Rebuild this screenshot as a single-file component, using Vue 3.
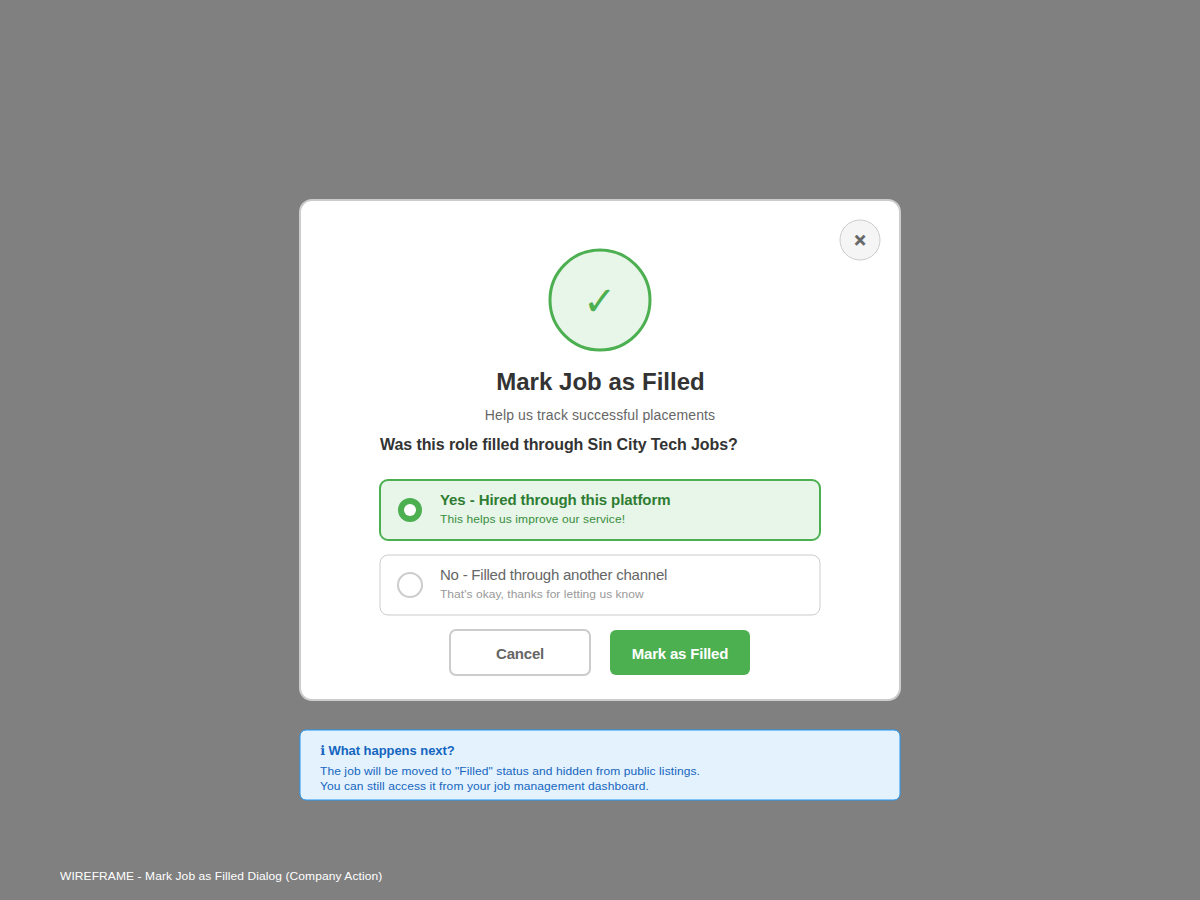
<script setup>
const options = [
  { title: 'Yes - Hired through this platform', note: 'This helps us improve our service!', selected: true },
  { title: 'No - Filled through another channel', note: "That's okay, thanks for letting us know", selected: false }
]
</script>

<template>
  <main class="screen">
    <section class="dialog" role="dialog">
      <button class="close" aria-label="Close">
        <svg class="frame" viewBox="0 0 42 42"><circle cx="21" cy="21" r="20" fill="#f5f5f5" stroke="#ccc" /></svg>
        <span class="close-mark">×</span>
      </button>
      <div class="badge">
        <svg class="frame" viewBox="0 0 104 104"><circle cx="52" cy="52" r="50" fill="#e8f5e9" stroke="#4caf50" stroke-width="3" /></svg>
        <span class="tick">✓</span>
      </div>
      <h1>Mark Job as Filled</h1>
      <p class="subtitle">Help us track successful placements</p>
      <div class="form">
        <h2>Was this role filled through Sin City Tech Jobs?</h2>
        <div v-for="o in options" :key="o.title" class="option" :class="{ selected: o.selected }">
          <svg class="frame" viewBox="0 0 442 62">
            <rect x="1" y="1" width="440" height="60" rx="8" :fill="o.selected ? '#e8f5e9' : '#fff'" :stroke="o.selected ? '#4caf50' : '#ccc'" :stroke-width="o.selected ? 2 : 1" />
          </svg>
          <svg class="radio" viewBox="0 0 26 26">
            <template v-if="o.selected">
              <circle cx="13" cy="13" r="12" fill="#4caf50" />
              <circle cx="13" cy="13" r="6" fill="#fff" />
            </template>
            <circle v-else cx="13" cy="13" r="12" fill="#fff" stroke="#ccc" stroke-width="2" />
          </svg>
          <div class="copy">
            <div class="option-title">{{ o.title }}</div>
            <div class="option-note small">{{ o.note }}</div>
          </div>
        </div>
      </div>
      <div class="actions">
        <button class="cancel">Cancel</button>
        <button class="confirm">Mark as Filled</button>
      </div>
    </section>
    <aside class="info">
      <svg class="frame" viewBox="0 0 602 72"><rect x="1" y="1" width="600" height="70" rx="6" fill="#e3f2fd" stroke="#2196f3" /></svg>
      <h3><span class="info-mark">ℹ</span> What happens next?</h3>
      <p class="small">The job will be moved to "Filled" status and hidden from public listings.</p>
      <p class="small">You can still access it from your job management dashboard.</p>
    </aside>
    <footer class="small">WIREFRAME - Mark Job as Filled Dialog (Company Action)</footer>
  </main>
</template>

<style>
body { margin: 0; background: #808080; }
</style>

<style scoped>
* { box-sizing: border-box; margin: 0; }
.screen {
  height: 900px;
  padding-top: 199px;
  display: flex;
  flex-direction: column;
  align-items: center;
  overflow: hidden;
  background: #808080;
  font-family: "Liberation Sans", Arial, sans-serif;
}
button { padding: 0; border: 0; font-family: inherit; }
.frame { position: absolute; inset: 0; width: 100%; height: 100%; display: block; }
/* Slightly flattened lettering for secondary copy */
.small { font-size: 12px; letter-spacing: 0.09px; transform: scaleY(0.94); transform-origin: 0 11px; }
.dialog {
  position: relative;
  width: 602px;
  height: 502px;
  padding-top: 47px;
  border: 2px solid #ccc;
  border-radius: 13px;
  background: #fff;
  display: flex;
  flex-direction: column;
  align-items: center;
}
.close {
  position: absolute;
  top: 18px;
  right: 18px;
  width: 42px;
  height: 42px;
  background: none;
  color: #666;
}
.close-mark { position: relative; font-size: 20px; font-weight: bold; line-height: 42px; display: block; -webkit-text-stroke: 0.5px #666; }
.badge { position: relative; width: 104px; height: 104px; text-align: center; }
.tick { position: relative; display: block; font-size: 40px; line-height: 106px; color: #4caf50; }
h1 { margin-top: 16px; padding-left: 1px; font-size: 24px; line-height: 28px; letter-spacing: 0.03px; color: #333; }
.subtitle { margin-top: 11px; font-size: 14px; line-height: 16px; letter-spacing: 0.11px; color: #666; }
.form { width: 442px; margin-top: 13px; }
h2 { padding-left: 1px; height: 43px; font-size: 16px; line-height: 18px; letter-spacing: -0.085px; color: #333; }
.option { position: relative; display: flex; height: 62px; padding: 12px 18px; margin-bottom: 13px; }
.radio { position: relative; width: 26px; height: 26px; margin: 6px 17px 0 0; }
.copy { position: relative; }
.option-title { height: 21px; font-size: 15px; line-height: 18px; letter-spacing: -0.23px; color: #666; }
.option-note { line-height: 14px; letter-spacing: 0.04px; color: #999; }
.selected .option-title { font-weight: bold; letter-spacing: -0.09px; color: #2e7d32; }
.selected .option-note { letter-spacing: 0.09px; color: #388e3c; }
.actions { display: flex; align-items: center; gap: 19px; margin-right: 1px; }
.actions button { padding-top: 2px; font-size: 15px; font-weight: bold; letter-spacing: -0.2px; }
.cancel { width: 142px; height: 47px; border: 2px solid #ccc; border-radius: 7px; background: #fff; color: #666; }
.confirm { width: 140px; height: 45px; border-radius: 6px; background: #4caf50; color: #fff; }
.info { position: relative; width: 602px; height: 72px; margin-top: 28px; padding: 14px 21px; color: #1565c0; }
.info h3 { position: relative; height: 21px; font-size: 13px; line-height: 15px; letter-spacing: -0.05px; }
.info-mark { font-family: "DejaVu Sans", sans-serif; line-height: 1; }
.info p { position: relative; line-height: 15px; }
footer { align-self: flex-start; margin: 68px 0 0 60px; line-height: 14px; color: #fff; }
</style>
